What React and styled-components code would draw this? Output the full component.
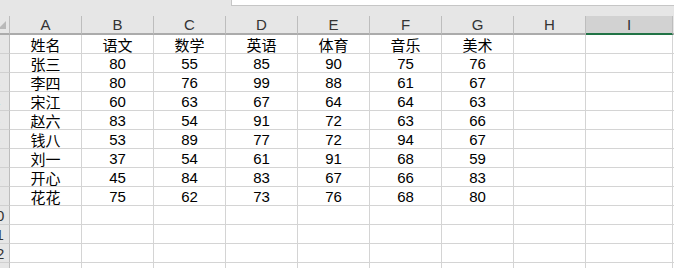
import React from "react";
import styled, { createGlobalStyle } from "styled-components";

const GlobalStyle = createGlobalStyle`
  html, body {
    margin: 0;
    padding: 0;
    background: #ffffff;
  }
  body {
    font-family: "Liberation Sans", "Noto Sans CJK SC", Arial, sans-serif;
  }
`;

const Window = styled.div`
  width: 674px;
  height: 268px;
  overflow: hidden;
  background: #ffffff;
`;

const TopBar = styled.div`
  height: 16px;
  background: #e6e6e6;
  display: flex;
  align-items: flex-start;
  padding-left: 231px;
`;

const FormulaEdge = styled.div`
  flex: 1;
  height: 5px;
  background: #ffffff;
  border-left: 1px solid #c6c6c6;
  border-bottom: 1px solid #c6c6c6;
`;

/* sheet is scrolled a little to the right, so the row header is cut off */
const Sheet = styled.div`
  display: grid;
  grid-template-columns: 27px repeat(8, 72px) 87px 72px;
  grid-auto-rows: 19px;
  margin-left: -17px;
`;

const Cell = styled.div`
  box-sizing: border-box;
  border-right: 1px solid #d4d4d4;
  border-bottom: 1px solid #d4d4d4;
  display: flex;
  align-items: center;
  justify-content: center;
  font-size: 15px;
  color: #000000;
  white-space: nowrap;
  font-family: "Liberation Sans", "Noto Sans CJK SC", Arial, sans-serif;
`;

const ColHead = styled.div`
  box-sizing: border-box;
  height: 19px;
  background: ${(p) => (p.$selected ? "#d2d2d2" : "#e6e6e6")};
  border-right: 1px solid #bdbdbd;
  border-bottom: 2px solid ${(p) => (p.$selected ? "#217346" : "#ababab")};
  display: flex;
  align-items: center;
  justify-content: center;
  font-size: 15px;
  color: #333333;
  font-family: "Liberation Sans", Arial, sans-serif;
`;

const Corner = styled(ColHead)`
  align-items: flex-end;
  justify-content: flex-end;
  padding: 0 3px 4px 0;
`;

const RowHead = styled.div`
  box-sizing: border-box;
  background: #e6e6e6;
  border-right: 1px solid #bdbdbd;
  border-bottom: 1px solid #d0d0d0;
  display: flex;
  align-items: center;
  justify-content: center;
  font-size: 15px;
  color: #333333;
  font-family: "Liberation Sans", Arial, sans-serif;
`;

const columns = ["A", "B", "C", "D", "E", "F", "G", "H", "I", ""];

const data = [
  ["姓名", "语文", "数学", "英语", "体育", "音乐", "美术"],
  ["张三", 80, 55, 85, 90, 75, 76],
  ["李四", 80, 76, 99, 88, 61, 67],
  ["宋江", 60, 63, 67, 64, 64, 63],
  ["赵六", 83, 54, 91, 72, 63, 66],
  ["钱八", 53, 89, 77, 72, 94, 67],
  ["刘一", 37, 54, 61, 91, 68, 59],
  ["开心", 45, 84, 83, 67, 66, 83],
  ["花花", 75, 62, 73, 76, 68, 80],
];

const TOTAL_ROWS = 13;

function CornerMark() {
  return (
    <svg width="8" height="8" viewBox="0 0 8 8">
      <polygon points="8,0 8,8 0,8" fill="#b9b9b9" />
    </svg>
  );
}

export default function App() {
  const rows = [];
  for (let r = 0; r < TOTAL_ROWS; r++) {
    const values = data[r] || [];
    rows.push(
      <React.Fragment key={r}>
        <RowHead>{r + 1}</RowHead>
        {columns.map((c, i) => (
          <Cell key={c + i}>{values[i] ?? ""}</Cell>
        ))}
      </React.Fragment>
    );
  }

  return (
    <Window>
      <GlobalStyle />
      <TopBar>
        <FormulaEdge />
      </TopBar>
      <Sheet>
        <Corner>
          <CornerMark />
        </Corner>
        {columns.map((c, i) => (
          <ColHead key={c + i} $selected={c === "I"}>
            {c}
          </ColHead>
        ))}
        {rows}
      </Sheet>
    </Window>
  );
}
